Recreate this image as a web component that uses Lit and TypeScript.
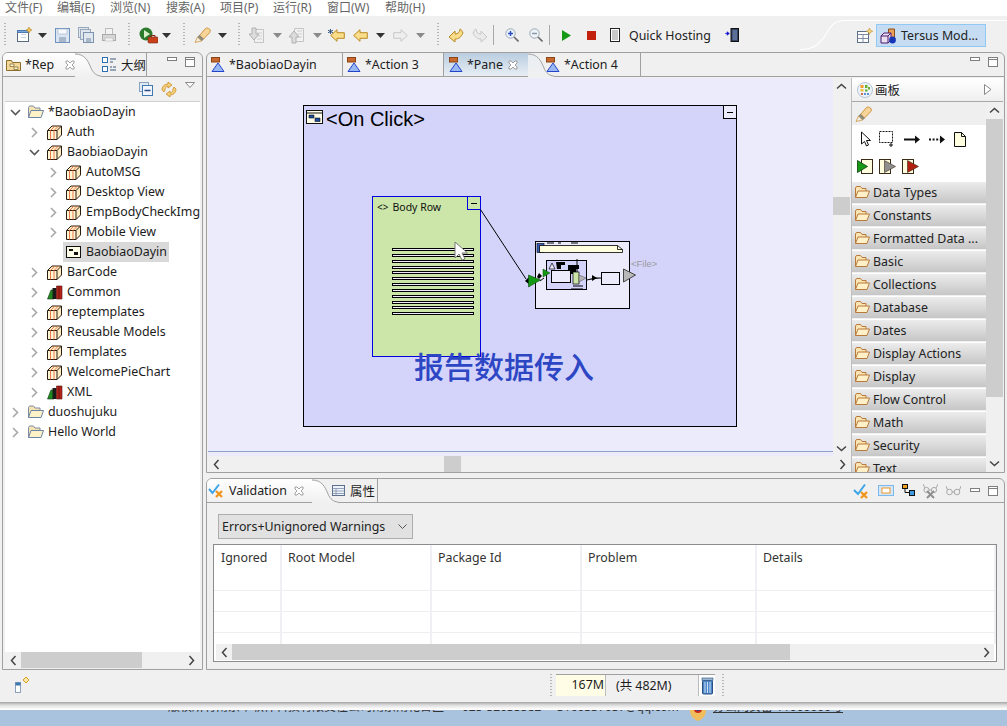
import { LitElement, html, css, svg } from "lit";
import { customElement } from "lit/decorators.js";

const ic = (w: number, h: number, body: unknown, cls = "") =>
  html`<svg class="ic ${cls}" width=${w} height=${h} viewBox="0 0 ${w} ${h}">${body}</svg>`;

const I = {
  drop: () => ic(9, 5, svg`<path d="M0 0h9L4.5 5z" fill="#333"/>`),
  dropG: () => ic(9, 5, svg`<path d="M0 0h9L4.5 5z" fill="#8a8a8a"/>`),
  newFile: () => ic(16, 16, svg`<rect x="1.5" y="3.5" width="11" height="11" fill="#fff" stroke="#5a6a80"/><path d="M1.5 3.5h11v2h-11z" fill="#7aa6d8" stroke="#4a7ab0"/><path d="M5 7.5h5M5 10.5h5" stroke="#c9d4e0"/><path d="M13 0l1 2 2 1-2 1-1 2-1-2-2-1 2-1z" fill="#f2c14e" stroke="#a87818" stroke-width=".5"/>`),
  save: (c = "#6f93bd") => ic(16, 16, svg`<rect x=".5" y="1.5" width="14" height="14" fill="#d9e5f2" stroke=${c}/><rect x="3" y="2" width="9" height="5" fill="#f6f8fb" stroke="#9db3cc" stroke-width=".6"/><rect x="4" y="10" width="7" height="5" fill="#a9b8c8"/>`),
  saveAll: () => ic(16, 16, svg`<rect x=".5" y=".5" width="10" height="10" fill="#dfe6ee" stroke="#97a8bc"/><rect x="2.5" y="2.5" width="10" height="10" fill="#dfe6ee" stroke="#97a8bc"/><rect x="5.5" y="5.5" width="10" height="10" fill="#dfe6ee" stroke="#7d93ad"/><rect x="8" y="11" width="5" height="4" fill="#a9b8c8"/>`),
  print: () => ic(16, 16, svg`<rect x="4.5" y="1.5" width="7" height="6" fill="#f3f3f3" stroke="#bbb"/><rect x="1.5" y="7.5" width="13" height="6" fill="#d6d6d6" stroke="#aaa"/><rect x="4" y="11" width="8" height="3" fill="#f3f3f3" stroke="#bbb" stroke-width=".6"/>`),
  run: () => ic(19, 17, svg`<circle cx="7" cy="7" r="6.5" fill="#2c7a2c"/><path d="M5 3l6 4-6 4z" fill="#d9f0c8"/><rect x="9" y="10" width="10" height="6" rx="1" fill="#c8411b" stroke="#7a2410" stroke-width=".6"/><path d="M12 10V8.5h4V10" fill="none" stroke="#7a2410"/>`),
  pencil: () => ic(17, 16, svg`<path d="M5.5 8.500L11.500 1.500c1-.8 3-.5 4 .5s1 2.500.3 3.500L9.500 12z" fill="#f6d49a" stroke="#c98a2c" stroke-width=".9"/><path d="M3.500 10l2-1.800 4 4-2 1.800z" fill="#8d8d84" stroke="#6a6a60" stroke-width=".5"/><path d="M3.500 10l4 4-6.500 1.500z" fill="#f0f0e8" stroke="#c98a2c" stroke-width=".7"/>`),
  imp: () => ic(16, 17, svg`<path d="M5.5 2.5h9v13h-9z" fill="#f2f2f2" stroke="#c4c4c4"/><path d="M8 6h5M8 9h5M8 12h5" stroke="#cfcfcf"/><path d="M3 1h4v6h3L5 13 0 7h3z" fill="#dcdcdc" stroke="#b0b0b0"/>`),
  exp: () => ic(16, 17, svg`<path d="M5.5 1.5h9v13h-9z" fill="#f2f2f2" stroke="#c4c4c4"/><path d="M8 4h5M8 7h5M8 10h5" stroke="#cfcfcf"/><path d="M3 16h4v-6h3L5 4 0 10h3z" fill="#dcdcdc" stroke="#b0b0b0"/>`),
  arrL: (f = "#f9dd8a", s = "#b98a20") => ic(15, 13, svg`<path d="M.7 6.5L7 .7v3h7.3v5.6H7v3z" fill=${f} stroke=${s}/>`),
  arrR: () => ic(15, 13, svg`<path d="M14.3 6.5L8 .7v3H.7v5.6H8v3z" fill="#eee" stroke="#c8c8c8"/>`),
  arrLstar: () => ic(17, 13, svg`<path d="M2.7 6.5L9 .7v3h7.3v5.6H9v3z" fill="#f9dd8a" stroke="#b98a20"/><path d="M2.5 0v5M0 1.2l5 2.6M0 3.8l5-2.6" stroke="#26467a" stroke-width=".9"/>`),
  undo: () => ic(16, 15, svg`<path d="M1 9l6 5v-3c4 0 6-2 8-6-1-2-2-4-3-4 0 3-2 5-5 5V3z" fill="#f9dd8a" stroke="#b98a20"/>`),
  redo: () => ic(16, 15, svg`<path d="M15 9l-6 5v-3c-4 0-6-2-8-6 1-2 2-4 3-4 0 3 2 5 5 5V3z" fill="#eaeaea" stroke="#c8c8c8"/>`),
  sep: () => html`<span class="sep"></span>`,
  zoom: (plus: boolean) => ic(14, 14, svg`<circle cx="5.5" cy="5.5" r="4.7" fill="#eef3fa" stroke="#9aa7b5"/><path d="M3 5.5h5" stroke=${plus ? "#2b4fc4" : "#8a97a8"} stroke-width="1.5"/>${plus ? svg`<path d="M5.5 3v5" stroke="#2b4fc4" stroke-width="1.5"/>` : ""}<path d="M9 9l4.5 4.5" stroke="#6a6a6a" stroke-width="1.6"/>`),
  play: () => ic(9, 11, svg`<path d="M0 0l9 5.5L0 11z" fill="#169a16"/>`),
  stop: () => ic(9, 9, svg`<rect width="9" height="9" fill="#c4200e"/>`),
  doc: () => ic(10, 14, svg`<rect x=".5" y=".5" width="9" height="13" fill="#fff" stroke="#222"/><path d="M2.5 3h1m1 0h1m1 0h1M2.5 5h1m1 0h1m1 0h1M2.5 7h1m1 0h1m1 0h1M2.5 9h1m1 0h1m1 0h1M2.5 11h1m1 0h1m1 0h1" stroke="#222"/>`),
  phone: () => ic(14, 14, svg`<rect x="6" y=".5" width="7.5" height="13" fill="#33425f" stroke="#111"/><rect x="7.5" y="2" width="4.5" height="10" fill="#5c6f99"/><path d="M0 5.5h3M2 3.8l2.4 1.7L2 7.2z" fill="#1515d0" stroke="#1515d0" stroke-width=".7"/>`),
  persp: () => ic(16, 16, svg`<rect x=".5" y="3.5" width="11" height="11" fill="#fff" stroke="#5d7088"/><path d="M.5 6.5h11M6 6.5v8M.5 10.5h11" stroke="#7c8ea5"/><path d="M12.5 0l1 2.3 2.3 1-2.3 1-1 2.3-1-2.3-2.3-1 2.3-1z" fill="#f6d27a" stroke="#b88820" stroke-width=".5"/>`),
  tersus: () => ic(17, 16, svg`<path d="M8.5 1h6v11h-6z" fill="#e9a15b" stroke="#8a4f1a"/><path d="M1 8l3-3h7v7l-3 3H1z" fill="#e8dff0" stroke="#4c1b6c"/><path d="M1 8h7v7M8 8l3-3" fill="none" stroke="#4c1b6c"/><circle cx="12.5" cy="12" r="3.4" fill="#1836b8"/>`),
  pkg: () => ic(15, 15, svg`<path d="M.5 5.5l4.500-4.500h9.500v9l-4.500 4.500" fill="#ffeec4" stroke="#2b1c10"/><path d="M.5 5.5h9.500v9H.5z" fill="#fff6d4" stroke="#2b1c10"/><path d="M3.500 5.500v9M7 5.500v9M3.500 5.500l4.500-4.500M7 5.500l4.500-4.500" stroke="#ea6a3e" stroke-width=".9"/><path d="M10 5.500l4.500-4.500" stroke="#2b1c10"/>`),
  folder: () => ic(16, 14, svg`<path d="M.5 12.5V2.5l1-1.5h4l1.500 2h5v2.500" fill="#f6e3b2" stroke="#7d8ca3"/><path d="M.5 12.5l2.500-7h12.500l-2.500 7z" fill="#fdf1c8" stroke="#6a83a6"/>`),
  paletteFolder: () => ic(15, 13, svg`<path d="M.5 11.5V2l1-1.5h4L7 2.5h4V5" fill="#fbe5b2" stroke="#b9793a"/><path d="M.5 11.5L3 5h11.500l-2.500 6.500z" fill="#fff0c8" stroke="#b9793a"/>`),
  books: () => ic(16, 15, svg`<path d="M.5 14l3.500-9h3v9z" fill="#1e8a1e" stroke="#103010" stroke-width=".6"/><path d="M5.5 14V3h4v11z" fill="#1a1a1a"/><path d="M9.5 14V1h5.500v13z" fill="#b2241b" stroke="#5a120c" stroke-width=".6"/><path d="M12 1v13" stroke="#6e1610"/>`),
  page: () => ic(15, 12, svg`<rect x=".5" y=".5" width="14" height="11" fill="#fffde8" stroke="#111"/><path d="M3 3h4v2H3zM8 6h4v3H8z" fill="#111"/>`),
  twistR: () => ic(7, 11, svg`<path d="M1 1l4.500 4.500L1 10" fill="none" stroke="#a8a8a8" stroke-width="1.600"/>`),
  twistD: () => ic(11, 7, svg`<path d="M1 1l4.500 4.500L10 1" fill="none" stroke="#555" stroke-width="1.600"/>`),
  repTab: () => ic(15, 12, svg`<path d="M.5 11.500v-10h5l1 2h8v8z" fill="#f2d99a" stroke="#8b6a2a"/><path d="M4 5h4v2.500H4zM8 8h4v2.500H8z" fill="#fff4d0" stroke="#7a6028" stroke-width=".7"/>`),
  close: () => ic(10, 10, svg`<path d="M1 1l2 0 2 2 2-2 2 0 0 2-2 2 2 2 0 2-2 0-2-2-2 2-2 0 0-2 2-2-2-2z" fill="#fff" stroke="#8b8b8b" stroke-width=".8"/>`),
  outline: () => ic(15, 15, svg`<rect x=".5" y=".5" width="5" height="5" fill="#fff" stroke="#2e6fb4"/><rect x=".5" y="9.500" width="5" height="5" fill="#fff" stroke="#2e6fb4"/><path d="M8 2h6M8 5h3M8 10h2M11 10h3M8 13h6" stroke="#3a5a7a"/>`),
  min: () => ic(10, 5, svg`<rect x=".5" y=".5" width="9" height="3" fill="#fff" stroke="#7f7f7f"/>`),
  max: () => ic(10, 10, svg`<rect x=".5" y=".5" width="9" height="9" fill="#fff" stroke="#7f7f7f"/><path d="M.5 2.500h9" stroke="#7f7f7f"/>`),
  collapse: () => ic(14, 14, svg`<rect x=".5" y=".5" width="9" height="9" fill="#dfe9f4" stroke="#8aa2bd"/><rect x="3.500" y="3.500" width="10" height="10" fill="#f0f6fb" stroke="#3f79b0"/><path d="M5.500 8.500h6" stroke="#2b4a8a" stroke-width="1.400"/>`),
  sync: () => ic(16, 15, svg`<path d="M1 8C1 4 4 2 7 2V0l4 3-4 3V4C5 4 4 6 4 8l-1 2z" fill="#f6cf7a" stroke="#c48518" stroke-width=".7"/><path d="M15 7c0 4-3 6-6 6v2l-4-3 4-3v2c2 0 3-2 3-4l1-2z" fill="#f6cf7a" stroke="#c48518" stroke-width=".7"/>`),
  menuTri: () => ic(10, 6, svg`<path d="M.5.5h9L5 5.500z" fill="#fff" stroke="#8a8a8a"/>`),
  cubePalette: () => ic(16, 16, svg`<circle cx="8" cy="8" r="7.500" fill="#eef3f8" stroke="#b5c4d4"/><rect x="3.500" y="3" width="3" height="3" fill="#f29a2e"/><rect x="8" y="3" width="2.500" height="3" fill="#68b030"/><rect x="11" y="5" width="2" height="2.500" fill="#68b030"/><rect x="3.500" y="7" width="3" height="2.500" fill="#f4c23a"/><rect x="8" y="7.500" width="2.500" height="2" fill="#68b030"/><circle cx="5" cy="12" r="1.100" fill="#d04a2a"/><circle cx="8" cy="12" r="1.100" fill="#3a7ad0"/><circle cx="11" cy="12" r="1.100" fill="#3a7ad0"/>`),
  triOpen: () => ic(8, 11, svg`<path d="M.5.5l6.500 5-6.500 5z" fill="#fff" stroke="#888"/>`),
  select: () => ic(11, 16, svg`<path d="M1.500 1v12l3-2.500 2 4.500 2-1-2-4.500h4z" fill="#fff" stroke="#111"/>`),
  marquee: () => ic(17, 16, svg`<rect x=".5" y=".5" width="13" height="11" fill="none" stroke="#111" stroke-dasharray="2 1"/><path d="M12 12v4M10 14h4" stroke="#111"/>`),
  link: () => ic(17, 9, svg`<path d="M0 4.500h12" stroke="#111" stroke-width="2"/><path d="M11 .5l5 4-5 4z" fill="#111"/>`),
  dashed: () => ic(17, 9, svg`<path d="M0 4.500h12" stroke="#111" stroke-width="2" stroke-dasharray="2 1.600"/><path d="M11 .5l5 4-5 4z" fill="#111"/>`),
  note: () => ic(12, 15, svg`<path d="M.5.5h7l4 4v10H.5z" fill="#ffffe0" stroke="#111"/><path d="M7.500.5v4h4" fill="none" stroke="#111"/>`),
  slotIn: () => ic(16, 15, svg`<rect x="4.500" y=".5" width="11" height="14" fill="#ffffe0" stroke="#3a2a1a"/><path d="M.5 1.500l10 6-10 6z" fill="#169a16" stroke="#0a3a0a" stroke-width=".8"/>`),
  slot: (c: string) => ic(17, 15, svg`<rect x=".5" y=".5" width="11" height="14" fill="#ffffe0" stroke="#3a2a1a"/><path d="M5.500 1.500l11 6-11 6z" fill=${c} stroke="#3a2a1a" stroke-width=".6"/>`),
  validation: () => ic(16, 15, svg`<path d="M1 6l3.500 4L11 1.500" fill="none" stroke="#3da5e8" stroke-width="2"/><path d="M8 8l6 6M14 8l-6 6" stroke="#f0961e" stroke-width="2.400"/>`),
  table: () => ic(13, 11, svg`<rect x=".5" y=".5" width="12" height="10" fill="#eef3fa" stroke="#5d6f88"/><path d="M.5 3.500h12M.5 6h12M.5 8.500h12M4 3.500v7" stroke="#7d8ea8" stroke-width=".8"/>`),
  vTick: () => ic(16, 16, svg`<path d="M1 7l4 4L12 1.500" fill="none" stroke="#3da5e8" stroke-width="2"/><path d="M8 9l6 6M14 9l-6 6" stroke="#f0961e" stroke-width="2.400"/>`),
  vBox: () => ic(16, 11, svg`<rect x=".5" y=".5" width="15" height="10" fill="#d3e7f8" stroke="#7db8ec"/><rect x="4" y="3" width="8" height="5" fill="#fff" stroke="#f0961e"/>`),
  vTree: () => ic(13, 13, svg`<rect x=".5" y=".5" width="5" height="4" fill="#f0a020" stroke="#111"/><path d="M3 4.500v4h4" fill="none" stroke="#111"/><rect x="7.500" y="6.500" width="5" height="5" fill="#3d9be0" stroke="#111"/>`),
  vGlassX: () => ic(15, 16, svg`<circle cx="3.500" cy="7" r="2.600" fill="none" stroke="#a8a8a8"/><circle cx="11" cy="7" r="2.600" fill="none" stroke="#a8a8a8"/><path d="M0 1l2 4M15 1l-2 4M6 7h2.500" stroke="#a8a8a8"/><path d="M4 8l7 7M11 8l-7 7" stroke="#8f8f8f" stroke-width="2"/>`),
  vGlass: () => ic(15, 11, svg`<circle cx="3.500" cy="7" r="2.800" fill="none" stroke="#a8a8a8"/><circle cx="11" cy="7" r="2.800" fill="none" stroke="#a8a8a8"/><path d="M0 1l1.500 4M15 1l-1.500 4M6.300 7h2" stroke="#a8a8a8"/>`),
  chevL: () => ic(7, 11, svg`<path d="M5.500 1L1.500 5.500l4 4.500" fill="none" stroke="#444" stroke-width="1.500"/>`),
  chevR: () => ic(7, 11, svg`<path d="M1.500 1l4 4.500-4 4.500" fill="none" stroke="#444" stroke-width="1.500"/>`),
  chevU: () => ic(11, 7, svg`<path d="M1 5.500l4.500-4 4.500 4" fill="none" stroke="#444" stroke-width="1.500"/>`),
  chevD: () => ic(11, 7, svg`<path d="M1 1.500l4.500 4 4.500-4" fill="none" stroke="#444" stroke-width="1.500"/>`),
  combo: () => ic(9, 5, svg`<path d="M.5.5L4.500 4.500l4-4" fill="none" stroke="#555"/>`),
  status: () => ic(15, 16, svg`<rect x=".5" y="5.500" width="5" height="10" fill="#fff" stroke="#8aa2bd"/><rect x=".5" y="5.500" width="5" height="3" fill="#3f79b0"/><path d="M11 0l3 3-3 3-3-3z" fill="#ffe9a8" stroke="#d89a20"/>`),
  trash: () => ic(13, 18, svg`<rect x="1.500" y="3.500" width="10" height="13.500" rx="1" fill="#4a86c8" stroke="#2a4f80"/><path d="M4 5v11M6.500 5v11M9 5v11" stroke="#cfe2f6"/><rect x="1" y="1" width="11" height="2.500" fill="#9ab6d0" stroke="#2a4f80" stroke-width=".6"/>`),
  cursor: () => ic(14, 21, svg`<path d="M1 1v16l4-4 3 6 3-1-3-6h5.500z" fill="#fff" stroke="#7a7a7a"/>`),
  onClick: () => ic(17, 14, svg`<rect x=".5" y=".5" width="16" height="13" fill="#fffde8" stroke="#111"/><path d="M.5 3h16" stroke="#111"/><path d="M3 5h5v3H3zM9 8h5v3.500H9z" fill="#1a4a9a" stroke="#111" stroke-width=".6"/>`),
  badge: () => ic(18, 14, svg`<path d="M1 0h16c1 5-2 11-8 13C3 11 0 5 1 0z" fill="#f1bc5c"/><circle cx="9" cy="1" r="4" fill="#c82a20"/><circle cx="9" cy="1" r="2" fill="#2a3f9a"/>`),
};

const TOOLBAR: [number, () => unknown][] = [
  [4, () => html`<span class="grip"></span>`],
  [16, I.newFile], [38, I.drop], [55, () => I.save()], [78, I.saveAll], [101, I.print],
  [128, () => html`<span class="grip"></span>`],
  [139, I.run], [162, I.drop],
  [183, () => html`<span class="grip"></span>`],
  [194, I.pencil], [218, I.drop],
  [238, () => html`<span class="grip"></span>`],
  [249, I.imp], [273, I.dropG], [289, I.exp], [313, I.dropG],
  [328, I.arrLstar], [353, () => I.arrL()], [376, I.drop], [393, I.arrR], [416, I.dropG],
  [437, () => html`<span class="grip"></span>`],
  [448, I.undo], [472, I.redo], [493, I.sep],
  [505, () => I.zoom(true)], [529, () => I.zoom(false)], [549, I.sep],
  [562, I.play], [587, I.stop], [610, I.doc],
  [629, () => html`<span class="qh">Quick Hosting</span>`],
  [725, I.phone],
];
const TW: Record<number, number> = {};
[4, 128, 183, 238, 437].forEach((x) => (TW[x] = 2));
Object.assign(TW, { 16: 16, 38: 9, 55: 16, 78: 16, 101: 16, 139: 19, 162: 9, 194: 17, 218: 9, 249: 16, 273: 9, 289: 16, 313: 9, 328: 17, 353: 15, 376: 9, 393: 15, 416: 9, 448: 16, 472: 16, 493: 1, 505: 14, 529: 14, 549: 1, 562: 9, 587: 9, 610: 10, 629: 82, 725: 14 });

const TREE: [number, string, string, string, boolean?][] = [
  [0, "d", "folder", "*BaobiaoDayin"],
  [1, "r", "pkg", "Auth"],
  [1, "d", "pkg", "BaobiaoDayin"],
  [2, "r", "pkg", "AutoMSG"],
  [2, "r", "pkg", "Desktop View"],
  [2, "r", "pkg", "EmpBodyCheckImg"],
  [2, "r", "pkg", "Mobile View"],
  [2, "", "page", "BaobiaoDayin", true],
  [1, "r", "pkg", "BarCode"],
  [1, "r", "books", "Common"],
  [1, "r", "pkg", "reptemplates"],
  [1, "r", "pkg", "Reusable Models"],
  [1, "r", "pkg", "Templates"],
  [1, "r", "pkg", "WelcomePieChart"],
  [1, "r", "books", "XML"],
  [0, "r", "folder", "duoshujuku"],
  [0, "r", "folder", "Hello World"],
];

const DRAWERS = ["Data Types", "Constants", "Formatted Data ...", "Basic", "Collections", "Database", "Dates", "Display Actions", "Display", "Flow Control", "Math", "Security", "Text"];
const COLS: [string, number][] = [["Ignored", 68], ["Root Model", 150], ["Package Id", 150], ["Problem", 175], ["Details", 239]];
const LINE_COUNT = Array.from({ length: 12 }, (_, i) => i);

const curve = (top: string, stroke: string) => html`<svg class="curve" width="26" height="24" viewBox="0 0 26 24"><defs><linearGradient id=${"g" + top.slice(1)} x1="0" y1="0" x2="0" y2="1"><stop offset="0" stop-color=${top}/><stop offset="1" stop-color="#f0f0f0"/></linearGradient></defs><path d="M0 1C10 1 13 8 16 15C18 20 22 23 26 23V24H0Z" fill=${"url(#g" + top.slice(1) + ")"}/><path d="M0 1C10 1 13 8 16 15C18 20 22 23 26 23" fill="none" stroke=${stroke}/></svg>`;

const edTab = (text: string) => html`<span class="edic">${ic(14, 15, svg`<rect x=".5" y=".5" width="8" height="4.500" fill="#c9682c" stroke="#8a4518"/><path d="M7 6l6 8.500H1z" fill="#9ab8f2" stroke="#2244cc"/>`)}</span><span>${text}</span>`;

@customElement("app-root")
export class AppRoot extends LitElement {
  static styles = css`
    :host { display: block; width: 1007px; height: 726px; overflow: hidden; font: 12.4px "Noto Sans", "Noto Sans CJK SC", sans-serif; color: #1c1c1c; }
    .ic { display: block; flex: none; }
    .win { display: grid; grid-template-rows: 16px 36px 620px 30px 24px; width: 1007px; height: 726px; background: #f0f0f0; }
    .menu { background: #fff; display: flex; align-items: flex-start; font-size: 12px; line-height: 16px; color: #666; padding-left: 5px; }
    .menu span { flex: none; }
    .menu span:nth-child(1) { width: 52px; } .menu span:nth-child(2) { width: 53px; } .menu span:nth-child(3) { width: 56px; }
    .menu span:nth-child(4) { width: 54px; } .menu span:nth-child(5) { width: 53px; } .menu span:nth-child(6) { width: 54px; }
    .menu span:nth-child(7) { width: 58px; }
    .toolbar { display: flex; align-items: center; }
    .tbi { margin-top: 2px; flex: none; }
    .grip { display: block; width: 2px; height: 24px; background-image: linear-gradient(#b5b5b5 50%, transparent 50%); background-size: 2px 3px; }
    .sep { display: block; width: 1px; height: 20px; background: #a8a8a8; }
    .qh { display: block; width: 82px; white-space: nowrap; color: #222; }
    .switcher { margin-left: auto; width: 207px; display: flex; align-self: stretch; flex: none; }
    .swcurve { display: block; flex: none; }
    .swbody { flex: 1; margin-top: 4px; border-top: 1px solid #fff; box-sizing: border-box; display: flex; align-items: flex-start; padding: 3px 0 0 12px; min-width: 0; }
    .persp { display: flex; align-items: center; height: 23px; margin-right: 3px; }
    .tersus { display: flex; align-items: center; gap: 4px; width: 110px; height: 23px; box-sizing: border-box; padding-left: 3px; background: #c5dcf3; border: 1px solid #90c8f6; white-space: nowrap; color: #222; }
    .bench { display: grid; grid-template-columns: 201px 799px; grid-template-rows: 618px; gap: 3px; padding: 0 2px 2px; min-height: 0; }
    .right { display: grid; grid-template-rows: 421px 192px; gap: 5px; min-height: 0; }
    .panel { border: 1px solid #a0a0a0; border-radius: 6px 6px 0 0; display: flex; flex-direction: column; min-height: 0; overflow: hidden; background: #f0f0f0; }
    .tabs { display: flex; height: 24px; flex: none; align-items: stretch; border-bottom: 1px solid #a0a0a0; box-sizing: border-box; }
    .tab { display: flex; align-items: center; white-space: nowrap; box-sizing: border-box; color: #1c1c1c; flex: none; }
    .tabs .end { margin-left: auto; display: flex; align-items: center; }
    .curve { display: block; flex: none; margin-bottom: -1px; }
    .rep { width: 72px; padding-left: 3px; gap: 4px; background: linear-gradient(#fff, #f0f0f0); }
    .rep .gapc { margin-left: 7px; }
    .out { width: 47px; margin-left: -1px; gap: 4px; border-right: 1px solid #a0a0a0; padding-left: 2px; }
    .left-end { padding-right: 7px; align-items: flex-start !important; padding-top: 4px; gap: 8px; }
    .left-tools { height: 24px; flex: none; display: flex; align-items: center; justify-content: flex-end; padding-right: 7px; gap: 8px; }
    .left-tools .tri { align-self: flex-start; margin-top: 5px; display: block; }
    .tree { flex: 1; background: #fff; margin: 0 2px; min-height: 0; overflow: hidden; border-top: 1px solid #d0d0d0; }
    .row { display: flex; height: 20px; align-items: center; white-space: nowrap; }
    .tw { width: 11px; display: flex; justify-content: center; flex: none; margin-right: 7px; }
    .rowic { flex: none; margin-right: 3px; width: 15px; display: flex; }
    .lab { padding: 0 2px; line-height: 20px; }
    .sel .lab { background: #d9d9d9; }
    .lv0 { padding-left: 5px; } .lv1 { padding-left: 24px; } .lv2 { padding-left: 43px; }
    .lv0 .rowic { width: 16px; margin-right: 2px; }
    .sel .tw { margin-right: 4px; }
    .sel .rowic { margin-right: 0; background: #d9d9d9; width: 21px; height: 20px; align-items: center; padding-left: 3px; box-sizing: border-box; }
    .hbar { height: 16px; display: flex; align-items: center; flex: none; background: #f0f0f0; }
    .hbar .thumb { background: #cdcdcd; height: 100%; flex: none; }
    .arrow { width: 16px; flex: none; display: flex; justify-content: center; align-items: center; }
    .grow { flex: 1; }
    .leftbar { margin: 0 3px 1px 2px; }
    .leftbar .thumb { width: 121px; }
    .e1 { width: 136px; gap: 4px; padding-left: 4px; border-right: 1px solid #a0a0a0; }
    .e2 { width: 101px; gap: 4px; padding-left: 4px; border-right: 1px solid #a0a0a0; }
    .e3 { width: 84px; gap: 4px; padding-left: 5px; background: linear-gradient(#b9cde0, #e8eef4); }
    .e3 .gapc { margin-left: 1px; }
    .e4 { width: 95px; gap: 4px; margin-left: -8px; border-right: 1px solid #a0a0a0; }
    .edic { display: flex; }
    .end-ed { padding-right: 6px; gap: 8px; align-items: flex-start !important; padding-top: 4px; }
    .edbody { flex: 1; display: grid; grid-template-columns: 625px 17px 1fr; min-height: 0; margin: 1px 1px 0 1px; }
    .edleft { display: flex; flex-direction: column; min-width: 0; min-height: 0; grid-column: 1 / 3; }
    .vwrap { display: grid; grid-template-columns: 625px 17px; flex: 1; min-height: 0; }
    .canvas { position: relative; background: #ebebfb; overflow: hidden; }
    .cline { position: absolute; left: 0; right: 0; top: 373px; height: 1px; background: #8fa0c8; }
    .vbar { background: #f0f0f0; display: flex; flex-direction: column; align-items: center; }
    .vbar .th { width: 100%; background: #cdcdcd; height: 18px; margin-top: 103px; }
    .vbar .arrow { height: 16px; }
    .edbar .thumb { width: 17px; margin-left: 220px; }
    .box { position: absolute; box-sizing: border-box; }
    .main { left: 95px; top: 27px; width: 434px; height: 322px; background: #d4d4fb; border: 1px solid #000; }
    .mtitle { position: absolute; left: 22px; top: 1px; font: 20px/25px "Liberation Sans", sans-serif; color: #000; white-space: nowrap; }
    .micon { position: absolute; left: 2px; top: 4px; }
    .mbtn { position: absolute; right: -1px; top: -1px; width: 14px; height: 14px; box-sizing: border-box; border: 1px solid #000; background: #ebebfb; display: flex; align-items: center; justify-content: center; }
    .mbtn i { display: block; width: 6px; height: 1px; background: #000; }
    .body { left: 164px; top: 118px; width: 109px; height: 161px; background: #cbe6a8; border: 1px solid #0000e0; }
    .btitle { position: absolute; left: 4px; top: 3px; font: 10.500px/14px "Noto Sans", sans-serif; color: #111; white-space: nowrap; }
    .btitle b { font-weight: 400; margin-right: 4px; font-size: 10px; }
    .bbtn { border-color: #0000e0; background: #cbe6a8; }
    .lines { position: absolute; left: 19px; top: 51px; display: flex; flex-direction: column; gap: 2.850px; }
    .lines i { display: block; width: 82px; height: 3px; box-sizing: border-box; border: 1px solid #000; background: #ebebfb; }
    .wire { position: absolute; left: 0; top: 0; }
    .big { position: absolute; left: 206px; top: 269px; font: 500 30px/36px "Noto Sans CJK SC", sans-serif; color: #2d46c4; white-space: nowrap; }
    .filetxt { position: absolute; left: 423px; top: 180px; font: 9.500px/12px "Liberation Sans", sans-serif; color: #9a9a9a; }
    .cursor { position: absolute; left: 246px; top: 163px; }
    .palette { display: flex; flex-direction: column; min-height: 0; background: #f0f0f0; border-left: 1px solid #bdbdbd; margin-left: 1px; margin-right: 1px; }
    .phead { height: 24px; flex: none; display: flex; align-items: center; padding: 0 11px 0 5px; gap: 2px; background: linear-gradient(#fff, #efefef); border-bottom: 1px solid #a8a8a8; box-sizing: border-box; }
    .phead .tr { margin-left: auto; }
    .pbody { flex: 1; display: grid; grid-template-columns: 134px 17px; min-height: 0; overflow: hidden; }
    .pcol { min-height: 0; overflow: hidden; }
    .ptop { height: 23px; display: flex; align-items: center; padding-left: 3px; background: #efefef; }
    .ptools { height: 56px; background: #fff; box-sizing: border-box; padding: 2px 0 0 5px; display: grid; grid-template-rows: 24px 24px; gap: 3px; }
    .prow { display: flex; align-items: center; gap: 6px; }
    .r1 { padding-left: 3px; gap: 8px; }
    .drawer { height: 23px; box-sizing: border-box; border-top: 1px solid #fff; border-bottom: 1px solid #f0f0f0; background: linear-gradient(#ececec, #c6c6c6); display: flex; align-items: center; gap: 3px; padding-left: 3px; white-space: nowrap; color: #222; }
    .pscroll { background: #f0f0f0; display: flex; flex-direction: column; align-items: stretch; }
    .pscroll .arrow { height: 17px; width: auto; }
    .pscroll .th { height: 278px; background: #cdcdcd; }
    .pscroll .g { flex: 1; }
    .v1 { width: 105px; gap: 5px; padding-left: 1px; background: linear-gradient(#fff, #f0f0f0); }
    .v1 .gapc { margin-left: 2px; }
    .v2 { width: 48px; gap: 5px; padding-left: 2px; margin-left: -8px; border-right: 1px solid #a0a0a0; }
    .vend { padding-right: 6px; gap: 8.300px; }
    .vbody { flex: 1; display: flex; flex-direction: column; min-height: 0; padding: 11px 7px 7px 6px; }
    .combo { margin-left: 5px; flex: none; width: 195px; height: 25px; box-sizing: border-box; background: #e1e1e1; border: 1px solid #adadad; display: flex; align-items: center; padding: 0 5px 0 3px; justify-content: space-between; color: #222; }
    .grid { margin-top: 5px; flex: 1; border: 1px solid #8c8c8c; background: #fff; display: flex; flex-direction: column; min-height: 0; overflow: hidden; }
    .ghead { display: flex; height: 45px; flex: none; }
    .ghead div, .gr div { box-sizing: border-box; flex: none; border-right: 2px solid #eef0f3; }
    .ghead div { padding: 3px 0 0 6px; line-height: 20px; color: #333; }
    .ghead div:first-child { padding-left: 7px; }
    .gr { display: flex; height: 21px; flex: none; border-top: 1px solid #eeeeee; box-sizing: border-box; }
    .gfill { flex: 1; min-height: 0; overflow: hidden; }
    .gridbar { margin: 0 2px 1px; }
    .gridbar .thumb { width: 558px; }
    .status { display: flex; align-items: flex-start; position: relative; z-index: 3; }
    .stic { margin: 5px 0 0 15px; }
    .gripS { display: block; width: 2px; height: 22px; margin-top: 2px; background-image: linear-gradient(#b5b5b5 50%, transparent 50%); background-size: 2px 3px; }
    .s1 { margin-left: 520px; }
    .s2 { margin-left: 7px; }
    .heap { display: flex; align-items: center; height: 22px; margin: 2px 0 0 4px; width: 159px; box-sizing: border-box; border-top: 1px solid #a0a0a0; }
    .heap .u { width: 50px; height: 100%; background: #fffde6; border-right: 1px solid #bbb; box-sizing: border-box; text-align: right; line-height: 20px; flex: none; padding-right: 1px; }
    .heap .t { flex: 1; line-height: 20px; white-space: pre; padding-left: 10px; }
    .heap .tb { flex: none; padding: 0 1px 0 2px; border-left: 1px solid #bbb; background: #fff; height: 100%; display: flex; align-items: center; }
    .foot { background: #a9c2de; overflow: hidden; display: flex; font-size: 12px; white-space: nowrap; position: relative; color: #333; padding-left: 168px; align-items: flex-start; }
    .shade { position: absolute; left: 0; right: 0; top: 0; height: 8px; background: linear-gradient(#a4a4a4, #dcdcdc 3px, #f6f6f6 6px, #fff); z-index: 2; }
    .foot span, .foot u { line-height: 14px; margin-top: -2px; flex: none; }
    .foot .t1 { width: 294px; } .foot .t2 { width: 95px; } .foot .t3 { width: 132px; }
    .foot u { margin-left: 24px; }
    .foot span.bd { margin: 6px 0 0 0; width: 0; overflow: visible; }
  `;

  private tabs(content: unknown) { return html`<div class="tabs">${content}</div>`; }

  render() {
    let prevEnd = 0;
    return html`<div class="win">
      <div class="menu">${["文件(F)", "编辑(E)", "浏览(N)", "搜索(A)", "项目(P)", "运行(R)", "窗口(W)", "帮助(H)"].map((m) => html`<span>${m}</span>`)}</div>

      <div class="toolbar">
        ${TOOLBAR.map(([x, f]) => {
          const m = x - prevEnd;
          prevEnd = x + TW[x];
          return html`<span class="tbi" style="margin-left:${m}px">${f()}</span>`;
        })}
        <div class="switcher">
          <svg class="swcurve" width="45" height="36" viewBox="0 0 45 36"><path d="M0 33.500C14 33.500 20 28 26 18C31 9 35 4.500 45 4.500" fill="none" stroke="#fff" stroke-width="1.200"/></svg>
          <div class="swbody"><span class="persp">${I.persp()}</span><div class="tersus">${I.tersus()}<span>Tersus Mod...</span></div></div>
        </div>
      </div>

      <div class="bench">
        <div class="panel">
          ${this.tabs(html`
            <div class="tab rep">${I.repTab()}<span>*Rep</span><span class="gapc">${I.close()}</span></div>${curve("#ffffff", "#a0a0a0")}
            <div class="tab out">${I.outline()}<span>大纲</span></div>
            <div class="end left-end">${I.min()}${I.max()}</div>`)}
          <div class="left-tools">${I.collapse()}${I.sync()}<span class="tri">${I.menuTri()}</span></div>
          <div class="tree">
            ${TREE.map(([lv, tw, icon, label, sel]) => html`<div class="row lv${lv} ${sel ? "sel" : ""}">
              <span class="tw">${tw === "d" ? I.twistD() : tw === "r" ? I.twistR() : ""}</span>
              <span class="rowic">${(I as any)[icon]()}</span>
              <span class="lab">${label}</span></div>`)}
          </div>
          <div class="hbar leftbar"><span class="arrow">${I.chevL()}</span><span class="thumb"></span><span class="grow"></span><span class="arrow">${I.chevR()}</span></div>
        </div>

        <div class="right">
          <div class="panel ed">
            ${this.tabs(html`
              <div class="tab e1">${edTab("*BaobiaoDayin")}</div>
              <div class="tab e2">${edTab("*Action 3")}</div>
              <div class="tab e3">${edTab("*Pane")}<span class="gapc">${I.close()}</span></div>${curve("#e8eef4", "#a0a0a0")}
              <div class="tab e4">${edTab("*Action 4")}</div>
              <div class="end end-ed">${I.min()}${I.max()}</div>`)}
            <div class="edbody">
              <div class="edleft">
                <div class="vwrap">
                  <div class="canvas">
                    <div class="cline"></div>
                    <div class="box main">
                      <span class="micon">${I.onClick()}</span>
                      <span class="mtitle">&lt;On Click&gt;</span>
                      <span class="mbtn"><i></i></span>
                    </div>
                    <div class="box body">
                      <span class="btitle"><b>&lt;&gt;</b>Body Row</span>
                      <span class="mbtn bbtn"><i></i></span>
                      <div class="lines">${LINE_COUNT.map(() => html`<i></i>`)}</div>
                    </div>
                    <svg class="wire" width="625" height="373" viewBox="208 78 625 373">
                      <path d="M480.500 209.500L526 279" stroke="#000" fill="none"/>
                      <g transform="translate(525 235)">
                        <rect x="10.500" y="6.500" width="94" height="67" fill="#ebebfb" stroke="#000"/>
                        <rect x="12" y="8.500" width="7" height="9" fill="#3a5fc0" stroke="#000" stroke-width=".6"/>
                        <path d="M22 8h7M33 8h3M46 8h7" stroke="#000"/>
                        <path d="M14.500 10.500h78l5 4v3h-83z" fill="#ffffe0" stroke="#000" stroke-width=".8"/>
                        <path d="M92.500 10.500v4h5" fill="none" stroke="#000" stroke-width=".8"/>
                        <rect x="21.500" y="25.500" width="40" height="29" fill="#d4d4fb" stroke="#000"/>
                        <rect x="26.500" y="35.500" width="19" height="12" fill="#ebebfb" stroke="#000"/>
                        <path d="M24 34l3-6 3 6z" fill="#ebebfb" stroke="#000" stroke-width=".7"/>
                        <path d="M31 27h9v3h-4v4h-4zM43 30h11v4h-3v5h-5v-4h-3z" fill="#000"/>
                        <path d="M52 24v21" stroke="#000"/>
                        <rect x="48" y="37" width="6" height="12" fill="#cbe6a8" stroke="#000" stroke-width=".7"/>
                        <path d="M48 51h10M46 54h12" stroke="#000"/>
                        <path d="M54 40l7 3-7 4z" fill="#b5b5b5" stroke="#444" stroke-width=".5"/>
                        <path d="M62 45l8-2h6" stroke="#000"/>
                        <path d="M67 40l5 3-5 3z" fill="#000"/>
                        <rect x="76.500" y="37.500" width="18" height="12" fill="#ebebfb" stroke="#000"/>
                        <path d="M98.500 34l12 6-12 7z" fill="#b8b8b8" stroke="#444"/>
                        <path d="M15 46l4-3" stroke="#000"/>
                        <path d="M18 34l7 4-7 4z" fill="#149a14" stroke="#0a4a0a" stroke-width=".5"/>
                        <path d="M14 38l3 3-3 3-2-2z" fill="#000"/>
                        <path d="M0 46l4-4 1 8z" fill="#000"/>
                        <path d="M3.500 40l12 5-12 7z" fill="#149a14" stroke="#0a4a0a" stroke-width=".6"/>
                      </g>
                    </svg>
                    <span class="filetxt">&lt;File&gt;</span>
                    <span class="big">报告数据传入</span>
                    <span class="cursor">${I.cursor()}</span>
                  </div>
                  <div class="vbar"><span class="arrow">${I.chevU()}</span><span class="th"></span><span class="grow"></span><span class="arrow">${I.chevD()}</span></div>
                </div>
                <div class="hbar edbar"><span class="arrow">${I.chevL()}</span><span class="thumb"></span><span class="grow"></span><span class="arrow">${I.chevR()}</span></div>
              </div>
              <div class="palette">
                <div class="phead">${I.cubePalette()}<span>画板</span><span class="tr">${I.triOpen()}</span></div>
                <div class="pbody">
                  <div class="pcol">
                    <div class="ptop">${I.pencil()}</div>
                    <div class="ptools">
                      <div class="prow r1">${I.select()}${I.marquee()}${I.link()}${I.dashed()}${I.note()}</div>
                      <div class="prow">${I.slotIn()}${I.slot("#8f8f8f")}${I.slot("#b2200e")}</div>
                    </div>
                    ${DRAWERS.map((d) => html`<div class="drawer">${I.paletteFolder()}<span>${d}</span></div>`)}
                  </div>
                  <div class="pscroll"><span class="arrow">${I.chevU()}</span><span class="th"></span><span class="g"></span><span class="arrow">${I.chevD()}</span></div>
                </div>
              </div>
            </div>
          </div>

          <div class="panel vpanel">
            ${this.tabs(html`
              <div class="tab v1">${I.validation()}<span>Validation</span><span class="gapc">${I.close()}</span></div>${curve("#ffffff", "#a0a0a0")}
              <div class="tab v2">${I.table()}<span>属性</span></div>
              <div class="end vend">${I.vTick()}${I.vBox()}${I.vTree()}${I.vGlassX()}${I.vGlass()}${I.min()}${I.max()}</div>`)}
            <div class="vbody">
              <div class="combo"><span>Errors+Unignored Warnings</span>${I.combo()}</div>
              <div class="grid">
                <div class="ghead">${COLS.map(([c, w]) => html`<div style="width:${w}px">${c}</div>`)}</div>
                <div class="gfill">${[0, 1, 2].map(() => html`<div class="gr">${COLS.map(([, w]) => html`<div style="width:${w}px"></div>`)}</div>`)}</div>
                <div class="hbar gridbar"><span class="arrow">${I.chevL()}</span><span class="thumb"></span><span class="grow"></span><span class="arrow">${I.chevR()}</span></div>
              </div>
            </div>
          </div>
        </div>
      </div>

      <div class="status">
        <span class="stic">${I.status()}</span>
        <span class="gripS s1"></span>
        <div class="heap"><span class="u">167M</span><span class="t">(共 482M)</span><span class="tb">${I.trash()}</span></div>
        <span class="gripS s2"></span>
      </div>

      <div class="foot">
        <div class="shade"></div>
        <span class="t1">版权所有南京市软件科技有限责任公司南京雨花台区</span><span class="t2">025-52035582</span><span class="t3">3160337037@qq.com</span>
        <span class="bd">${I.badge()}</span>
        <u>苏公网安备 11000000号</u>
      </div>
    </div>`;
  }
}
